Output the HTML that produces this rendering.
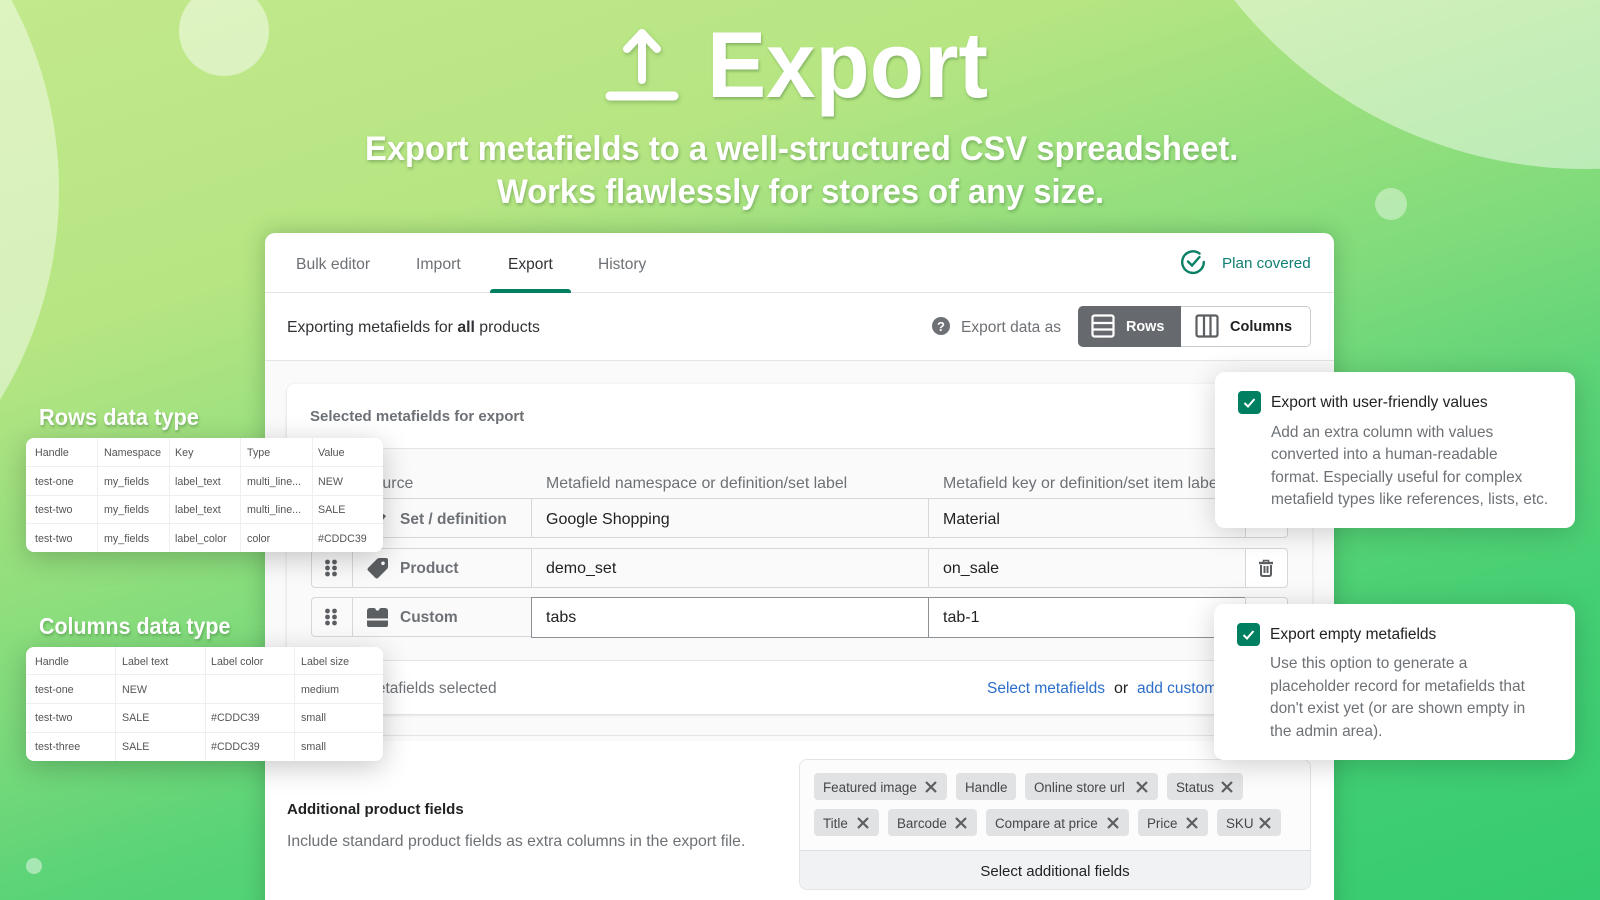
<!DOCTYPE html>
<html><head><meta charset="utf-8"><style>
html,body{margin:0;padding:0}
#p{position:relative;width:1600px;height:900px;overflow:hidden;font-family:"Liberation Sans","Noto Sans CJK JP",sans-serif;color:#202223;
background:linear-gradient(162deg,#c2e98c 0%,#b6e582 25%,#80db7b 50%,#5ad377 64%,#45cf73 78%,#36cb70 100%)}
.a{position:absolute}
.t{position:absolute;white-space:nowrap;line-height:20px;font-size:15.5px;transform-origin:0 50%}
.g{color:#6d7175}
.c{border-radius:50%;position:absolute}
.h{font-weight:700;color:#fff;text-shadow:1px 2px 3px rgba(40,90,40,.35)}
.b{position:absolute;background:#e1e2e4;border-radius:4px}
.tb{position:absolute;background:#fff;border-radius:8px;box-shadow:0 6px 28px rgba(0,0,0,.22);overflow:hidden;z-index:5}
.tb .l{position:absolute;background:#eeeff0}
.tb .t{font-size:10.7px;color:#555;margin-top:1px}
.pop{position:absolute;background:#fff;border-radius:10px;box-shadow:0 4px 28px rgba(0,0,0,.18);z-index:6}
.cell{position:absolute;box-sizing:border-box;border:1px solid #d5d7da;background:#fafafb}
.x{position:absolute;width:12px;height:12px}
.tg{font-size:13.4px;color:#44474a}
</style></head><body><div id="p">
<div class="c" style="left:-747px;top:-213px;width:806px;height:806px;background:rgba(255,255,255,.45)"></div>
<div class="c" style="left:179px;top:-14px;width:90px;height:90px;background:rgba(255,255,255,.47)"></div>
<div class="c" style="left:1135px;top:-733px;width:902px;height:902px;background:rgba(255,255,255,.45)"></div>
<div class="c" style="left:1375px;top:188px;width:32px;height:32px;background:rgba(255,255,255,.4)"></div>
<div class="c" style="left:26px;top:858px;width:16px;height:16px;background:rgba(255,255,255,.45)"></div>

<svg class="a" style="left:600px;top:22px;filter:drop-shadow(1px 2px 2px rgba(40,90,40,.3))" width="84" height="84" viewBox="600 22 84 84" fill="none" stroke="#fff" stroke-linecap="round" stroke-linejoin="round">
<path d="M642 80V33" stroke-width="8"/><path d="M627 49L642 33L657 49" stroke-width="8"/><path d="M610 96H674" stroke-width="9"/></svg>
<div class="t h" style="left:707px;top:15px;font-size:94px;line-height:100px;transform:scaleX(.944)">Export</div>
<div class="t h" style="left:365px;top:129px;font-size:34px;line-height:40px;transform:scaleX(.963)">Export metafields to a well-structured CSV spreadsheet.</div>
<div class="t h" style="left:497px;top:172px;font-size:34px;line-height:40px;transform:scaleX(.96)">Works flawlessly for stores of any size.</div>

<!-- main card -->
<div class="a" style="left:265px;top:233px;width:1069px;height:700px;background:#fff;border-radius:10px;box-shadow:0 0 22px rgba(30,80,40,.3);overflow:hidden">
  <div class="a" style="left:0;top:59px;width:100%;height:1px;background:#e3e4e6"></div>
  <div class="a" style="left:0;top:127px;width:100%;height:1px;background:#e3e4e6"></div>
  <div class="a" style="left:0;top:128px;width:100%;height:380px;background:#fafafb"></div>
</div>
<div class="t g" style="left:296px;top:255px;font-size:15.7px">Bulk editor</div>
<div class="t g" style="left:416px;top:255px;font-size:15.8px">Import</div>
<div class="t" style="left:508px;top:255px;color:#303236">Export</div>
<div class="t g" style="left:598px;top:255px">History</div>
<div class="a" style="left:490px;top:289px;width:81px;height:4px;background:#008060;border-radius:3px 3px 0 0"></div>
<svg class="a" style="left:1180px;top:249px" width="26" height="26" viewBox="0 0 26 26" fill="none" stroke="#0a7f63" stroke-width="2.4" stroke-linecap="round"><path d="M19.500 4.500A10.800 10.800 0 1 0 23.800 13"/><path d="M8 12.500L12 16.500L19.500 8"/></svg>
<div class="t" style="left:1222px;top:254px;color:#0f7f73;font-size:15.2px">Plan covered</div>

<div class="t" style="left:287px;top:318px;color:#303236;font-size:15.8px">Exporting metafields for <b>all</b> products</div>
<svg class="a" style="left:932px;top:317px" width="18" height="18" viewBox="0 0 18 18"><circle cx="9" cy="9" r="9" fill="#6d7175"/><text x="9" y="14" font-size="13" font-weight="700" text-anchor="middle" fill="#fff" font-family="Liberation Sans">?</text></svg>
<div class="t g" style="left:961px;top:318px">Export data as</div>
<div class="a" style="left:1078px;top:306px;width:233px;height:41px;box-sizing:border-box;border:1px solid #c9cccf;border-radius:5px;background:#fff"></div>
<div class="a" style="left:1078px;top:306px;width:103px;height:41px;background:#666a6f;border-radius:5px 0 0 5px"></div>
<svg class="a" style="left:1091px;top:314px" width="24" height="24" viewBox="0 0 24 24" fill="none" stroke="#fff" stroke-width="2.2"><rect x="1.5" y="1.5" width="21" height="21" rx="2"/><path d="M1.5 9H22.5M1.5 15.5H22.5"/></svg>
<div class="t" style="left:1126px;top:317px;color:#fff;font-weight:700;font-size:14.4px">Rows</div>
<svg class="a" style="left:1195px;top:314px" width="24" height="24" viewBox="0 0 24 24" fill="none" stroke="#5c5f62" stroke-width="2.2"><rect x="1.5" y="1.5" width="21" height="21" rx="2"/><path d="M9 1.5V22.5M15.500 1.5V22.5"/></svg>
<div class="t" style="left:1230px;top:317px;font-weight:700;font-size:14.5px">Columns</div>

<!-- selected card -->
<div class="a" style="left:287px;top:384px;width:1025px;height:330px;background:#fafafb;border-radius:8px;box-shadow:0 1px 3px rgba(0,0,0,.15)">
  <div class="a" style="left:0;top:0;width:100%;height:64px;background:#fff;border-bottom:1px solid #e3e4e6;border-radius:8px 8px 0 0"></div>
  <div class="a" style="left:0;top:276px;width:100%;height:53px;background:#fff;border-top:1px solid #e3e4e6;border-radius:0 0 8px 8px"></div>
</div>
<div class="t g" style="left:310px;top:407px;font-weight:700;font-size:15px">Selected metafields for export</div>
<div class="t g" style="left:363px;top:474px;font-size:15.9px">Source</div>
<div class="t g" style="left:546px;top:474px;font-size:15.9px">Metafield namespace or definition/set label</div>
<div class="t g" style="left:943px;top:474px;font-size:15.9px">Metafield key or definition/set item label</div>

<!-- rows -->
<div class="cell" style="left:311px;top:498px;width:42px;height:40px;border-radius:4px 0 0 4px"></div>
<div class="cell" style="left:352px;top:498px;width:180px;height:40px"></div>
<div class="cell" style="left:531px;top:498px;width:398px;height:40px"></div>
<div class="cell" style="left:928px;top:498px;width:318px;height:40px"></div>
<div class="cell" style="left:1245px;top:498px;width:43px;height:40px;background:#fff;border-radius:0 4px 4px 0"></div>
<svg class="a" style="left:367px;top:508px" width="22" height="20" viewBox="0 0 22 20"><path d="M3 8L11 2L19 8L11 18Z" fill="#5c5f62"/></svg>
<div class="t g" style="left:400px;top:510px;font-weight:700;font-size:15.5px">Set / definition</div>
<div class="t" style="left:546px;top:510px;font-size:16px">Google Shopping</div>
<div class="t" style="left:943px;top:510px;font-size:16px">Material</div>

<div class="cell" style="left:311px;top:548px;width:42px;height:40px;border-radius:4px 0 0 4px"></div>
<div class="cell" style="left:352px;top:548px;width:180px;height:40px"></div>
<div class="cell" style="left:531px;top:548px;width:398px;height:40px"></div>
<div class="cell" style="left:928px;top:548px;width:318px;height:40px"></div>
<div class="cell" style="left:1245px;top:548px;width:43px;height:40px;background:#fff;border-radius:0 4px 4px 0"></div>
<svg class="a" style="left:324px;top:559px" width="14" height="18" viewBox="0 0 14 18" fill="#5c5f62"><circle cx="3.500" cy="3" r="2.400"/><circle cx="10.500" cy="3" r="2.400"/><circle cx="3.500" cy="9" r="2.400"/><circle cx="10.500" cy="9" r="2.400"/><circle cx="3.500" cy="15" r="2.400"/><circle cx="10.500" cy="15" r="2.400"/></svg>
<svg class="a" style="left:367px;top:558px" width="21" height="21" viewBox="0 0 21 21"><path fill-rule="evenodd" d="M19 0H12Q11 0 10 1L1 10Q0 11.500 1 12.500L8.500 20Q10 21 11 20L20 11Q21 10 21 9V2Q21 0 19 0ZM16 3.500A1.800 1.800 0 1 1 16 7.100A1.800 1.800 0 1 1 16 3.500Z" fill="#5c5f62"/></svg>
<div class="t g" style="left:400px;top:559px;font-weight:700;font-size:15.5px">Product</div>
<div class="t" style="left:546px;top:559px;font-size:16px">demo_set</div>
<div class="t" style="left:943px;top:559px;font-size:16px">on_sale</div>
<svg class="a" style="left:1258px;top:559px" width="16" height="18" viewBox="0 0 16 18" fill="none" stroke="#5c5f62" stroke-width="2"><path d="M1 4H15" stroke-width="2.400"/><path d="M5.500 3.500V1.500H10.500V3.500" stroke-width="1.600"/><path d="M3 6V15Q3 17 5 17H11Q13 17 13 15V6M6.500 7V14M9.500 7V14"/></svg>

<div class="cell" style="left:311px;top:597px;width:42px;height:40px;border-radius:4px 0 0 4px"></div>
<div class="cell" style="left:352px;top:597px;width:180px;height:40px"></div>
<div class="cell" style="left:531px;top:597px;width:398px;height:41px;background:#fff;border-color:#8c9196"></div>
<div class="cell" style="left:928px;top:597px;width:318px;height:41px;background:#fff;border-color:#8c9196"></div>
<div class="cell" style="left:1245px;top:597px;width:43px;height:40px;background:#fff;border-radius:0 4px 4px 0"></div>
<svg class="a" style="left:324px;top:608px" width="14" height="18" viewBox="0 0 14 18" fill="#5c5f62"><circle cx="3.500" cy="3" r="2.400"/><circle cx="10.500" cy="3" r="2.400"/><circle cx="3.500" cy="9" r="2.400"/><circle cx="10.500" cy="9" r="2.400"/><circle cx="3.500" cy="15" r="2.400"/><circle cx="10.500" cy="15" r="2.400"/></svg>
<svg class="a" style="left:367px;top:607px" width="21" height="21" viewBox="0 0 21 21" fill="#5c5f62"><path d="M0 11.500V4Q0 1 3 1H7Q8.500 1 9 3L9.500 3.500H11.500L12 3Q12.500 1 14 1H18Q21 1 21 4V11.500Z"/><path d="M0 13.500H21V18Q21 20 19 20H2Q0 20 0 18Z"/></svg>
<div class="t g" style="left:400px;top:608px;font-weight:700;font-size:15.5px">Custom</div>
<div class="t" style="left:546px;top:608px;font-size:16px">tabs</div>
<div class="t" style="left:943px;top:608px;font-size:16px">tab-1</div>

<div class="t g" style="left:351px;top:679px">3 metafields selected</div>
<div class="t" style="left:987px;top:679px;color:#2c6ecb;font-size:15.5px">Select metafields</div>
<div class="t" style="left:1114px;top:679px;font-size:16px">or</div>
<div class="t" style="left:1137px;top:679px;color:#2c6ecb;font-size:15.5px">add custom</div>

<div class="a" style="left:265px;top:735px;width:1069px;height:1px;background:#e3e4e6"></div>
<div class="t" style="left:287px;top:800px;font-weight:700;font-size:15px">Additional product fields</div>
<div class="t g" style="left:287px;top:832px;font-size:15.78px">Include standard product fields as extra columns in the export file.</div>

<!-- tags -->
<div class="a" style="left:799px;top:759px;width:512px;height:131px;box-sizing:border-box;border:1px solid #e3e4e6;border-radius:8px;background:#fcfcfc;overflow:hidden">
  <div class="a" style="left:0;top:90px;width:100%;height:40px;background:#f1f2f3;border-top:1px solid #dfe0e2"></div>
</div>
<div class="t" style="left:1055px;top:862px;transform:translateX(-50%);font-size:15px;color:#202223">Select additional fields</div>

<div class="b" style="left:814px;top:773px;width:133px;height:27px"></div><div class="t tg" style="left:823px;top:778px">Featured image</div>
<svg class="x" style="left:925px;top:781px" viewBox="0 0 12 12"><path d="M1 1L11 11M11 1L1 11" stroke="#5c5f62" stroke-width="2.200"/></svg>
<div class="b" style="left:956px;top:773px;width:60px;height:27px"></div><div class="t tg" style="left:965px;top:778px">Handle</div>
<div class="b" style="left:1025px;top:773px;width:133px;height:27px"></div><div class="t tg" style="left:1034px;top:778px">Online store url</div>
<svg class="x" style="left:1136px;top:781px" viewBox="0 0 12 12"><path d="M1 1L11 11M11 1L1 11" stroke="#5c5f62" stroke-width="2.200"/></svg>
<div class="b" style="left:1167px;top:773px;width:76px;height:27px"></div><div class="t tg" style="left:1176px;top:778px">Status</div>
<svg class="x" style="left:1221px;top:781px" viewBox="0 0 12 12"><path d="M1 1L11 11M11 1L1 11" stroke="#5c5f62" stroke-width="2.200"/></svg>

<div class="b" style="left:814px;top:809px;width:65px;height:27px"></div><div class="t tg" style="left:823px;top:814px">Title</div>
<svg class="x" style="left:857px;top:817px" viewBox="0 0 12 12"><path d="M1 1L11 11M11 1L1 11" stroke="#5c5f62" stroke-width="2.200"/></svg>
<div class="b" style="left:888px;top:809px;width:89px;height:27px"></div><div class="t tg" style="left:897px;top:814px">Barcode</div>
<svg class="x" style="left:955px;top:817px" viewBox="0 0 12 12"><path d="M1 1L11 11M11 1L1 11" stroke="#5c5f62" stroke-width="2.200"/></svg>
<div class="b" style="left:986px;top:809px;width:143px;height:27px"></div><div class="t tg" style="left:995px;top:814px">Compare at price</div>
<svg class="x" style="left:1107px;top:817px" viewBox="0 0 12 12"><path d="M1 1L11 11M11 1L1 11" stroke="#5c5f62" stroke-width="2.200"/></svg>
<div class="b" style="left:1138px;top:809px;width:70px;height:27px"></div><div class="t tg" style="left:1147px;top:814px">Price</div>
<svg class="x" style="left:1186px;top:817px" viewBox="0 0 12 12"><path d="M1 1L11 11M11 1L1 11" stroke="#5c5f62" stroke-width="2.200"/></svg>
<div class="b" style="left:1217px;top:809px;width:64px;height:27px"></div><div class="t tg" style="left:1226px;top:814px">SKU</div>
<svg class="x" style="left:1259px;top:817px" viewBox="0 0 12 12"><path d="M1 1L11 11M11 1L1 11" stroke="#5c5f62" stroke-width="2.200"/></svg>

<!-- left tables -->
<div class="t h" style="left:39px;top:404px;font-size:23px;line-height:26px;transform:scaleX(.948)">Rows data type</div>
<div class="tb" style="left:26px;top:438px;width:357px;height:114px">
  <div class="l" style="left:71px;top:0;width:1px;height:114px"></div><div class="l" style="left:143px;top:0;width:1px;height:114px"></div><div class="l" style="left:214px;top:0;width:1px;height:114px"></div><div class="l" style="left:286px;top:0;width:1px;height:114px"></div>
  <div class="l" style="left:0;top:28px;width:357px;height:1px"></div><div class="l" style="left:0;top:57px;width:357px;height:1px"></div><div class="l" style="left:0;top:85px;width:357px;height:1px"></div>
  <div class="t" style="left:9px;top:4px">Handle</div><div class="t" style="left:78px;top:4px">Namespace</div><div class="t" style="left:149px;top:4px">Key</div><div class="t" style="left:221px;top:4px">Type</div><div class="t" style="left:292px;top:4px">Value</div>
  <div class="t" style="left:9px;top:33px">test-one</div><div class="t" style="left:78px;top:33px">my_fields</div><div class="t" style="left:149px;top:33px">label_text</div><div class="t" style="left:221px;top:33px">multi_line...</div><div class="t" style="left:292px;top:33px">NEW</div>
  <div class="t" style="left:9px;top:61px">test-two</div><div class="t" style="left:78px;top:61px">my_fields</div><div class="t" style="left:149px;top:61px">label_text</div><div class="t" style="left:221px;top:61px">multi_line...</div><div class="t" style="left:292px;top:61px">SALE</div>
  <div class="t" style="left:9px;top:90px">test-two</div><div class="t" style="left:78px;top:90px">my_fields</div><div class="t" style="left:149px;top:90px">label_color</div><div class="t" style="left:221px;top:90px">color</div><div class="t" style="left:292px;top:90px">#CDDC39</div>
</div>
<div class="t h" style="left:39px;top:613px;font-size:23px;line-height:26px;transform:scaleX(.93)">Columns data type</div>
<div class="tb" style="left:26px;top:647px;width:357px;height:114px">
  <div class="l" style="left:89px;top:0;width:1px;height:114px"></div><div class="l" style="left:179px;top:0;width:1px;height:114px"></div><div class="l" style="left:268px;top:0;width:1px;height:114px"></div>
  <div class="l" style="left:0;top:27px;width:357px;height:1px"></div><div class="l" style="left:0;top:56px;width:357px;height:1px"></div><div class="l" style="left:0;top:85px;width:357px;height:1px"></div>
  <div class="t" style="left:9px;top:4px">Handle</div><div class="t" style="left:96px;top:4px">Label text</div><div class="t" style="left:185px;top:4px">Label color</div><div class="t" style="left:275px;top:4px">Label size</div>
  <div class="t" style="left:9px;top:32px">test-one</div><div class="t" style="left:96px;top:32px">NEW</div><div class="t" style="left:275px;top:32px">medium</div>
  <div class="t" style="left:9px;top:60px">test-two</div><div class="t" style="left:96px;top:60px">SALE</div><div class="t" style="left:185px;top:60px">#CDDC39</div><div class="t" style="left:275px;top:60px">small</div>
  <div class="t" style="left:9px;top:89px">test-three</div><div class="t" style="left:96px;top:89px">SALE</div><div class="t" style="left:185px;top:89px">#CDDC39</div><div class="t" style="left:275px;top:89px">small</div>
</div>

<!-- popups -->
<div class="pop" style="left:1215px;top:372px;width:360px;height:156px">
  <svg class="a" style="left:23px;top:19px" width="23" height="23" viewBox="0 0 23 23"><rect width="23" height="23" rx="4" fill="#008060"/><path d="M6.500 12L10 15.500L16.500 8" fill="none" stroke="#fff" stroke-width="2"/></svg>
  <div class="t" style="left:56px;top:21px;font-size:15.6px">Export with user-friendly values</div>
  <div class="t g" style="left:56px;top:51px;font-size:15.45px">Add an extra column with values</div>
  <div class="t g" style="left:56px;top:73px;font-size:15.45px">converted into a human-readable</div>
  <div class="t g" style="left:56px;top:96px;font-size:15.45px">format. Especially useful for complex</div>
  <div class="t g" style="left:56px;top:118px;font-size:15.45px">metafield types like references, lists, etc.</div>
</div>
<div class="pop" style="left:1214px;top:604px;width:361px;height:156px">
  <svg class="a" style="left:23px;top:19px" width="23" height="23" viewBox="0 0 23 23"><rect width="23" height="23" rx="4" fill="#008060"/><path d="M6.500 12L10 15.500L16.500 8" fill="none" stroke="#fff" stroke-width="2"/></svg>
  <div class="t" style="left:56px;top:21px;font-size:15.5px">Export empty metafields</div>
  <div class="t g" style="left:56px;top:50px;font-size:15.45px">Use this option to generate a</div>
  <div class="t g" style="left:56px;top:73px;font-size:15.45px">placeholder record for metafields that</div>
  <div class="t g" style="left:56px;top:95px;font-size:15.45px">don't exist yet (or are shown empty in</div>
  <div class="t g" style="left:56px;top:118px;font-size:15.45px">the admin area).</div>
</div>
</div></body></html>
